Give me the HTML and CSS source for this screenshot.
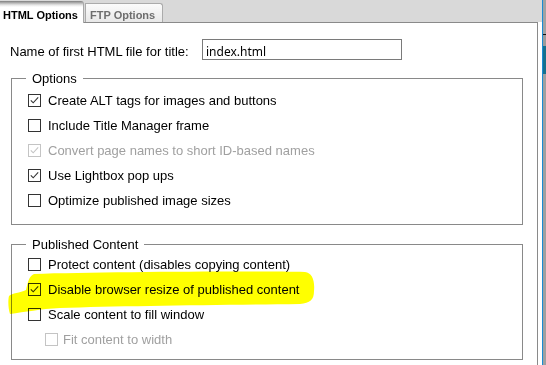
FILE: index.html
```html
<!DOCTYPE html>
<html>
<head>
<meta charset="utf-8">
<link rel="stylesheet" href="styles.css">
</head>
<body>
<div class="window">
  <div class="dialog">
    <div class="tabs">
      <div class="tab tab-active">HTML Options</div>
      <div class="tab tab-inactive">FTP Options</div>
    </div>
    <div class="panel">
      <div class="name-row">
        <label class="name-label">Name of first HTML file for title:</label>
        <div class="text-input">index.html</div>
      </div>

      <div class="group group-options">
        <div class="legend">Options</div>
        <div class="rows">
          <div class="row"><span class="cb"><svg viewBox="0 0 13 13" width="13" height="13"><rect x="0.5" y="0.5" width="12" height="12" fill="#fff" stroke="#333"/><polyline points="2.8,6.3 5.2,8.8 10.2,3.4" fill="none" stroke="#333" stroke-width="1.1"/></svg></span><span class="lbl">Create ALT tags for images and buttons</span></div>
          <div class="row"><span class="cb"><svg viewBox="0 0 13 13" width="13" height="13"><rect x="0.5" y="0.5" width="12" height="12" fill="#fff" stroke="#333"/></svg></span><span class="lbl">Include Title Manager frame</span></div>
          <div class="row row-disabled"><span class="cb"><svg viewBox="0 0 13 13" width="13" height="13"><rect x="0.5" y="0.5" width="12" height="12" fill="#fff" stroke="#c4c4c4"/><polyline points="2.8,6.3 5.2,8.8 10.2,3.4" fill="none" stroke="#c4c4c4" stroke-width="1.1"/></svg></span><span class="lbl">Convert page names to short ID-based names</span></div>
          <div class="row"><span class="cb"><svg viewBox="0 0 13 13" width="13" height="13"><rect x="0.5" y="0.5" width="12" height="12" fill="#fff" stroke="#333"/><polyline points="2.8,6.3 5.2,8.8 10.2,3.4" fill="none" stroke="#333" stroke-width="1.1"/></svg></span><span class="lbl">Use Lightbox pop ups</span></div>
          <div class="row"><span class="cb"><svg viewBox="0 0 13 13" width="13" height="13"><rect x="0.5" y="0.5" width="12" height="12" fill="#fff" stroke="#333"/></svg></span><span class="lbl">Optimize published image sizes</span></div>
        </div>
      </div>

      <div class="group group-published">
        <div class="legend">Published Content</div>
        <div class="rows">
          <div class="row"><span class="cb"><svg viewBox="0 0 13 13" width="13" height="13"><rect x="0.5" y="0.5" width="12" height="12" fill="#fff" stroke="#333"/></svg></span><span class="lbl">Protect content (disables copying content)</span></div>
          <div class="row"><span class="cb"><svg viewBox="0 0 13 13" width="13" height="13"><rect x="0.5" y="0.5" width="12" height="12" fill="#fff" stroke="#333"/><polyline points="2.8,6.3 5.2,8.8 10.2,3.4" fill="none" stroke="#333" stroke-width="1.1"/></svg></span><span class="lbl">Disable browser resize of published content</span></div>
          <div class="row"><span class="cb"><svg viewBox="0 0 13 13" width="13" height="13"><rect x="0.5" y="0.5" width="12" height="12" fill="#fff" stroke="#333"/></svg></span><span class="lbl">Scale content to fill window</span></div>
          <div class="row row-disabled row-indent"><span class="cb"><svg viewBox="0 0 13 13" width="13" height="13"><rect x="0.5" y="0.5" width="12" height="12" fill="#fff" stroke="#c4c4c4"/></svg></span><span class="lbl">Fit content to width</span></div>
        </div>
      </div>
    </div>
  </div>
  <div class="edge">
    <div class="edge-blue"></div>
    <div class="edge-strip">
      <div class="seg seg-top"></div>
      <div class="seg seg-line"></div>
      <div class="seg seg-mid"></div>
      <div class="seg seg-teal"></div>
      <div class="seg seg-rest"></div>
    </div>
  </div>
</div>
<svg class="highlight" width="546" height="365" viewBox="0 0 546 365">
  <path d="M 9 296 C 12 293, 20 293, 26 290 C 28 282, 29 276, 34 274 C 100 272, 250 271, 305 272 C 312 273, 315 280, 314 291 C 314 300, 310 303, 300 304 C 220 305, 120 306, 60 308 C 40 309, 25 312, 10 314 C 8 308, 8 300, 9 296 Z" fill="#ffff00"/>
</svg>
</body>
</html>
```
FILE: styles.css
```css
html, body {
  margin: 0;
  padding: 0;
}
body {
  position: relative;
  width: 546px;
  height: 365px;
  overflow: hidden;
  background: #fff;
  font-family: "Liberation Sans", Arial, sans-serif;
  font-size: 13px;
  color: #000;
}
.window {
  display: flex;
  height: 365px;
}
.dialog {
  width: 542px;
  display: flex;
  flex-direction: column;
  background: #fff;
}
.tabs {
  height: 22px;
  background: #d9d9d9;
  display: flex;
  align-items: flex-start;
  box-sizing: border-box;
  padding-top: 1px;
}
.tab {
  box-sizing: border-box;
  font-weight: bold;
  font-size: 11px;
  line-height: 13px;
  white-space: nowrap;
}
.tab-active {
  position: relative;
  z-index: 1;
  width: 84px;
  height: 22px;
  padding: 8px 0 0 3px;
  background: linear-gradient(to bottom, #7e7e7e 0px, #b4b4b4 2px, #e6e6e6 4px, #fff 6px);
  border-right: 1px solid #a8a8a8;
  border-top-right-radius: 3px;
  color: #000;
}
.tab-inactive {
  margin-top: 2px;
  margin-left: 1px;
  width: 78px;
  height: 19px;
  padding: 5px 0 0 4px;
  border: 1px solid #ababab;
  border-bottom: none;
  border-top-right-radius: 3px;
  background: linear-gradient(to bottom, #fbfbfb, #e8e8e8);
  color: #6e6e6e;
}
.panel {
  width: 538px;
  flex: 1;
  box-sizing: border-box;
  border-top: 1px solid #8a8a8a;
  border-right: 1px solid #8a8a8a;
  background: #fff;
}
.name-row {
  display: flex;
  align-items: baseline;
  padding: 16px 0 0 10px;
}
.name-label {
  width: 192px;
  flex-shrink: 0;
}
.text-input {
  width: 200px;
  height: 21px;
  box-sizing: border-box;
  border: 1px solid #7a7a7a;
  padding: 5px 0 0 3px;
  font-family: "Noto Sans", "Open Sans", sans-serif;
  font-size: 12px;
  line-height: 14px;
}
.group {
  border: 1px solid #898989;
  margin-left: 11px;
  margin-right: 14px;
}
.group-options {
  margin-top: 18px;
  padding-bottom: 11px;
}
.group-options .rows {
  margin-top: 2px;
}
.group-published {
  margin-top: 19px;
  padding-bottom: 7px;
}
.legend {
  width: max-content;
  margin: -8px 0 0 14px;
  padding: 0 6px;
  background: #fff;
  line-height: 15px;
}
.row {
  height: 25px;
  display: flex;
  align-items: center;
  padding-left: 16px;
  white-space: nowrap;
}
.cb {
  width: 13px;
  height: 13px;
  flex-shrink: 0;
  margin-right: 7px;
}
.cb svg {
  display: block;
}
.row-disabled {
  color: #a0a0a0;
}
.row-indent {
  padding-left: 33px;
}
.row-indent .cb {
  margin-right: 5px;
}
.edge {
  width: 4px;
  display: flex;
}
.edge-blue {
  width: 1px;
  background: #1a8ad4;
}
.edge-strip {
  width: 3px;
  display: flex;
  flex-direction: column;
}
.seg-top { height: 34px; background: #a2a2a2; }
.seg-line { height: 1px; background: #111; }
.seg-mid { height: 11px; background: #9c9c9c; }
.seg-teal { height: 28px; background: #17708e; }
.seg-rest { flex: 1; background: #a0a0a0; }
.highlight {
  position: absolute;
  left: 0;
  top: 0;
  pointer-events: none;
  mix-blend-mode: multiply;
}
```
